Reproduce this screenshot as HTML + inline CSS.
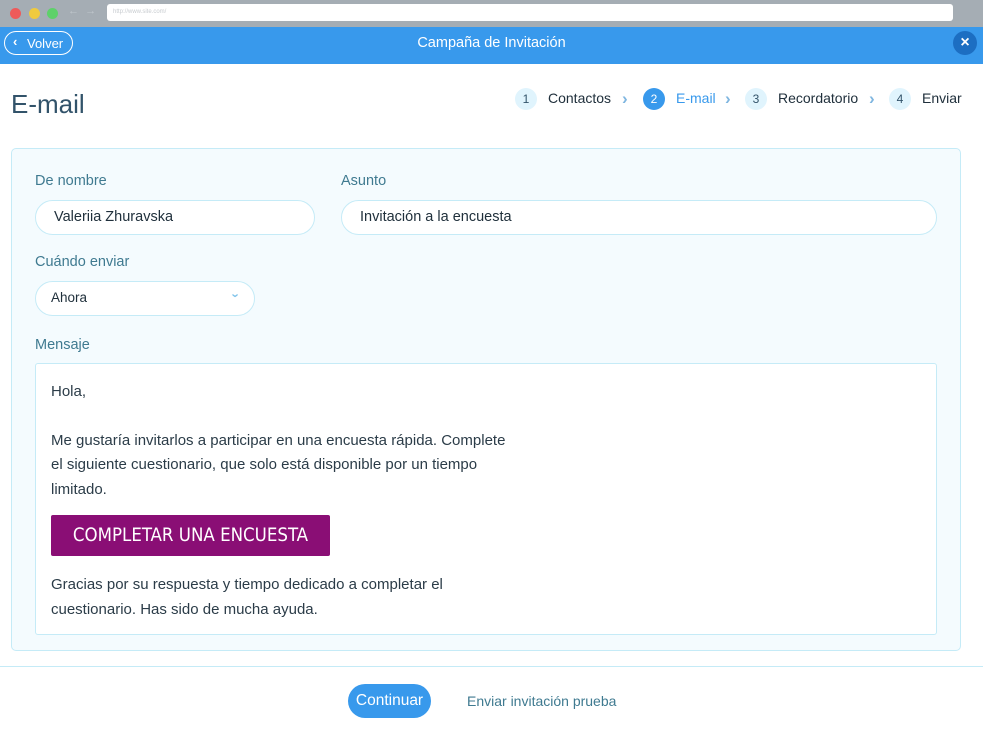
<!DOCTYPE html>
<html><head><meta charset="utf-8"><style>
*{box-sizing:border-box;margin:0;padding:0}
body{width:983px;height:734px;overflow:hidden;background:#fff;font-family:"Liberation Sans",sans-serif;position:relative;color:#20303c}
.a{position:absolute}
.chrome{left:0;top:0;width:983px;height:27px;background:#a5adb4}
.dot{width:11px;height:11px;border-radius:50%;top:8px}
.url{left:107px;top:4px;width:846px;height:17px;background:#fff;border-radius:3px;font-size:6px;color:#c8ccd0;padding:5px 6px}
.bar{left:0;top:27px;width:983px;height:37px;background:#3899ec}
.volver{left:4px;top:31px;width:69px;height:24px;border:1px solid #fff;border-radius:12px;color:#fff;font-size:13px;padding:4px 0 0 22px}
.title{left:0;width:983px;top:35px;text-align:center;color:#fff;font-size:14.5px}
.close{left:953px;top:31px;width:24px;height:24px;border-radius:50%;background:#1c6ec2;color:#fff;font-size:16px;text-align:center;line-height:23px;font-weight:bold}
h1{position:absolute;left:11px;top:89px;font-size:26px;font-weight:normal;color:#32536a}
.step{top:88px;width:22px;height:22px;border-radius:50%;background:#e0f4fd;font-size:12px;text-align:center;line-height:22px;color:#32536a}
.sl{top:90px;font-size:14px;color:#20303c}
.chev{top:89px;font-size:17px;color:#7fb6e0;font-weight:bold}
.panel{left:11px;top:148px;width:950px;height:503px;background:#f4fbfe;border:1px solid #c5ebf7;border-radius:5px}
.lbl{font-size:14.5px;color:#3f7a90}
.inp{background:#fff;border:1px solid #c5ebf7;border-radius:18px;height:35px;font-size:14.5px;padding:8px 0 0 18px;color:#20303c}
.msg{left:35px;top:363px;width:902px;height:272px;background:#fff;border:1px solid #c5ebf7;border-radius:3px;font-size:15px;line-height:24.5px;padding:0 15px;color:#2b3c48}
.btnp{left:51px;top:515px;width:279px;height:41px;background:#8a0e75;border-radius:2px;color:#fff;font-size:18.5px;text-align:center;line-height:42px;font-family:"DejaVu Sans Condensed","Liberation Sans Narrow",sans-serif}
.hr{left:0;top:666px;width:983px;height:1px;background:#c5ebf7}
.cont{left:348px;top:684px;width:83px;height:34px;border-radius:17px;background:#3899ec;color:#fff;font-size:15.5px;text-align:center;line-height:34px}
</style></head><body>
<div class="a chrome"></div>
<div class="a dot" style="left:10px;background:#ee5a5a"></div>
<div class="a dot" style="left:29px;background:#efca3e"></div>
<div class="a dot" style="left:47px;background:#5ed16a"></div>
<div class="a" style="left:68px;top:5px;color:#c0c6cc;font-size:11px">← &nbsp;→</div>
<div class="a url">http://www.site.com/</div>
<div class="a bar"></div>
<div class="a volver"><span class="a" style="left:8px;top:2px;font-weight:bold">‹</span>Volver</div>
<div class="a title">Campaña de Invitación</div>
<div class="a close">×</div>
<h1>E-mail</h1>
<div class="a step" style="left:515px">1</div><div class="a sl" style="left:548px">Contactos</div><div class="a chev" style="left:622px">›</div>
<div class="a step" style="left:643px;background:#3899ec;color:#fff">2</div><div class="a sl" style="left:676px;color:#3899ec">E-mail</div><div class="a chev" style="left:725px">›</div>
<div class="a step" style="left:745px">3</div><div class="a sl" style="left:778px">Recordatorio</div><div class="a chev" style="left:869px">›</div>
<div class="a step" style="left:889px">4</div><div class="a sl" style="left:922px">Enviar</div>
<div class="a panel"></div>
<div class="a lbl" style="left:35px;top:173px">De nombre</div>
<div class="a lbl" style="left:341px;top:173px">Asunto</div>
<div class="a inp" style="left:35px;top:200px;width:280px">Valeriia Zhuravska</div>
<div class="a inp" style="left:341px;top:200px;width:596px">Invitación a la encuesta</div>
<div class="a lbl" style="left:35px;top:254px">Cuándo enviar</div>
<div class="a inp" style="left:35px;top:281px;width:220px;font-size:13.5px;padding-left:15px">Ahora<span class="a" style="left:198px;top:6px;color:#7fc3ea;font-size:13px;font-weight:bold;transform:rotate(90deg)">›</span></div>
<div class="a lbl" style="left:35px;top:337px">Mensaje</div>
<div class="a msg"><div style="margin-top:16px">Hola,</div><div style="margin-top:24px">Me gustaría invitarlos a participar en una encuesta rápida. Complete<br>el siguiente cuestionario, que solo está disponible por un tiempo<br>limitado.</div>
<div style="margin-top:71px">Gracias por su respuesta y tiempo dedicado a completar el<br>cuestionario. Has sido de mucha ayuda.</div></div>
<div class="a btnp">COMPLETAR UNA ENCUESTA</div>
<div class="a hr"></div>
<div class="a cont">Continuar</div>
<div class="a" style="left:467px;top:693px;font-size:14px;color:#3f7a90">Enviar invitación prueba</div>
</body></html>
